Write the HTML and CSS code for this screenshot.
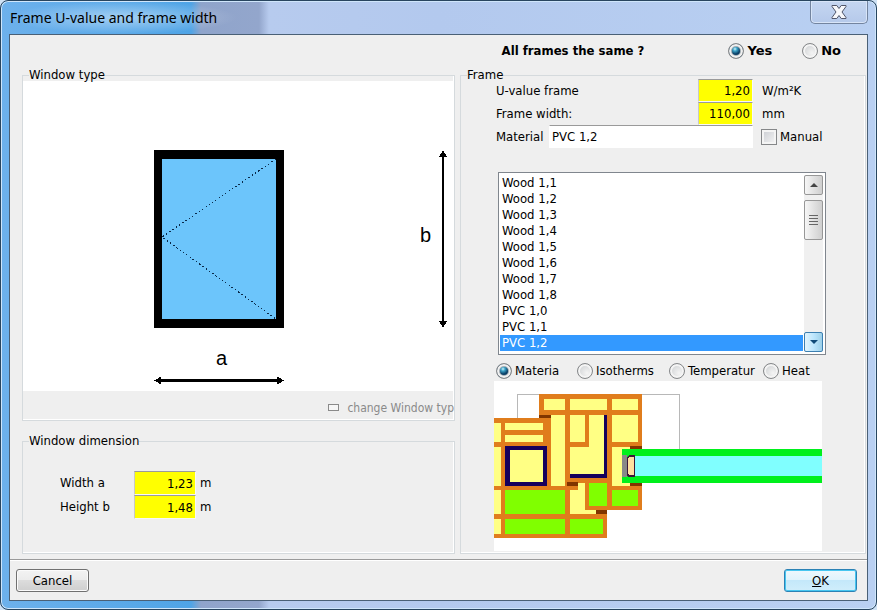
FILE: index.html
```html
<!DOCTYPE html>
<html lang="en">
<head>
<meta charset="utf-8">
<title>Frame U-value and frame width</title>
<link rel="stylesheet" href="styles.css">
</head>
<body>
<div class="window">
  <header class="titlebar">
    <h1 class="title">Frame U-value and frame width</h1>
    <button class="close" type="button" aria-label="Close">
      <svg width="16" height="14" viewBox="0 0 16 14"><path d="M1 .5h4.800L8 3.500 10.200 .5H15v1L11 7l4 5.500v1h-4.800L8 10.500l-2.200 3H1v-1L5 7 1 1.500z" fill="#f6f7fa" stroke="#50566a" stroke-linejoin="round"/></svg>
    </button>
  </header>

  <form class="client">
    <div class="same">
      <span class="question">All frames the same ?</span>
      <label class="choice strong"><input class="radio" type="radio" name="same" checked>Yes</label>
      <label class="choice strong"><input class="radio" type="radio" name="same">No</label>
    </div>

    <div class="groups">
      <div class="column">
        <fieldset class="group">
          <legend>Window type</legend>
          <svg class="drawing" viewBox="0 0 431 310" shape-rendering="crispEdges">
            <rect width="431" height="310" fill="#fff"/>
            <rect x="131" y="69" width="130" height="178"/>
            <rect x="139" y="78" width="114" height="160" fill="#6cc5fb"/>
            <path d="M253 78L139 156L253 238" fill="none" stroke="#0a2a4a" stroke-dasharray="1.500 2.500"/>
            <rect x="135" y="298" width="122" height="3"/>
            <path d="M131 299.500l7-4v8zM261 299.500l-7-4v8z"/>
            <rect x="419" y="74" width="2" height="169"/>
            <path d="M420 69l-4 7h8zM420 247l-4-7h8z"/>
            <text class="mark" x="193" y="284">a</text>
            <text class="mark" x="397" y="161">b</text>
          </svg>
          <div class="change"><button class="change-button" type="button" disabled><span class="slot"></span><span>change Window typ</span></button></div>
        </fieldset>

        <fieldset class="group dimension">
          <legend>Window dimension</legend>
          <div class="dim-grid">
            <label for="width">Width a</label><input class="number" id="width" type="text" value="1,23"><span>m</span>
            <label for="height">Height b</label><input class="number" id="height" type="text" value="1,48"><span>m</span>
          </div>
        </fieldset>
      </div>

      <fieldset class="group frame">
        <legend>Frame</legend>
        <div class="frame-grid">
          <label class="wide" for="uvalue">U-value frame</label><input class="number" id="uvalue" type="text" value="1,20"><span class="unit">W/m²K</span>
          <label class="wide" for="fwidth">Frame width:</label><input class="number" id="fwidth" type="text" value="110,00"><span class="unit">mm</span>
          <label for="material">Material</label><input class="name" id="material" type="text" value="PVC 1,2"><label class="unit choice"><input class="check" type="checkbox">Manual</label>
        </div>

        <div class="listbox">
          <select class="list" size="11" aria-label="Material">
            <option>Wood 1,1</option>
            <option>Wood 1,2</option>
            <option>Wood 1,3</option>
            <option>Wood 1,4</option>
            <option>Wood 1,5</option>
            <option>Wood 1,6</option>
            <option>Wood 1,7</option>
            <option>Wood 1,8</option>
            <option>PVC 1,0</option>
            <option>PVC 1,1</option>
            <option selected>PVC 1,2</option>
          </select>
          <div class="scrollbar">
            <button class="arrow" type="button" aria-label="Scroll up"><svg width="8" height="4" viewBox="0 0 8 4"><path d="M0 4L4 0l4 4z" fill="#444"/></svg></button>
            <div class="thumb"><svg width="9" height="10" viewBox="0 0 9 10"><path d="M0 .5h9M0 3.500h9M0 6.500h9M0 9.500h9" stroke="#666"/></svg></div>
            <button class="arrow hot" type="button" aria-label="Scroll down"><svg width="8" height="4" viewBox="0 0 8 4"><path d="M0 0h8L4 4z" fill="#0f4a78"/></svg></button>
          </div>
        </div>

        <div class="views">
          <label class="choice"><input class="radio" type="radio" name="view" checked>Materia</label>
          <label class="choice"><input class="radio" type="radio" name="view">Isotherms</label>
          <label class="choice"><input class="radio" type="radio" name="view">Temperatur</label>
          <label class="choice"><input class="radio" type="radio" name="view">Heat</label>
        </div>

        <svg class="section" viewBox="42 3 984 510" shape-rendering="crispEdges">
          <rect x="42" y="3" width="984" height="510" fill="#fff"/>
          <path d="M111 120V43H598V210" fill="none" stroke="#b8b8b8" stroke-width="3"/>
          <!-- profile body -->
          <path d="M177 42H486V390H381V474H42V114H177z" fill="#e07d1c"/>
          <path d="M381 390H486V474H381z" fill="#fff"/>
          <!-- chambers -->
          <g fill="#ffff84">
            <path d="M192 56h64v34h-64zM270 56h112v34H270zM396 56h78v34h-78z"/>
            <path d="M213 104h43v213h-43zM270 104h45v82h-45zM327 104h45v178H270V200h57zM396 104h78v82h-78z"/>
            <path d="M42 129h21v57H42zM76 129h113v21H76zM76 164h113v22H76z"/>
            <path d="M42 200h21v117H42zM396 200h55v8h-24v98h24v11h-55z"/>
            <path d="M42 330h21v72H42zM42 416h21v45H42zM270 330h23v-22h21v81h33v13h-77z"/>
          </g>
          <g fill="#80ff00">
            <path d="M76 330h180v72H76zM76 416h180v45H76zM270 416h99v45h-99zM328 308h53v70h-53zM396 330h77v48h-77z"/>
          </g>
          <!-- steel reinforcement -->
          <path d="M75 198h126v120H75z" fill="#15005c"/>
          <path d="M89 210h101v96H89z" fill="#ffff84"/>
          <path d="M371 104h11v191H270v-13h101z" fill="#15005c"/>
          <!-- gaskets -->
          <path d="M177 104h36v10h-36zM261 307h32v11h-32zM450 198h36v11h-36zM450 307h36v11h-36zM348 390h33v12h-33z" fill="#803500"/>
          <!-- glazing -->
          <path d="M426 208h600v100H426z" fill="#00f01c"/>
          <path d="M465 227h561v62H465z" fill="#80ffff"/>
          <path d="M427 226h14v66h-14z" fill="#888"/>
          <path d="M441 232l6-6h18v66h-18l-6-6z" fill="#3c1838"/>
          <path d="M444 236l5-6h12v56h-12l-5-6z" fill="#ffe0a0"/>
        </svg>
      </fieldset>
    </div>

    <footer class="actions">
      <button class="button" type="button">Cancel</button>
      <button class="button default" type="submit"><u>O</u>K</button>
    </footer>
  </form>
</div>
</body>
</html>
```
FILE: styles.css
```css
* { box-sizing: border-box; }

body {
  margin: 0;
  font: 13px/16px Tahoma, "DejaVu Sans Condensed", "Noto Sans", sans-serif;
  color: #000;
  background: #cfe2f5;
}

input, select, button { font: inherit; color: inherit; }

.window {
  display: flex;
  flex-direction: column;
  min-height: 100vh;
  padding: 0 8px 8px;
  border: 1px solid #28455f;
  border-radius: 8px;
  box-shadow: inset 0 0 0 1px #cfe6fb;
  background: linear-gradient(90deg, #6db1ec 0, #4fa4e6 190px, #8fa4cb 200px, #93a6cc 258px, #b7cbee 268px, #b3c9ee 50%, #b9d0f2);
}

.titlebar {
  display: flex;
  justify-content: space-between;
  align-items: flex-start;
  height: 33px;
}

.title {
  margin: 0;
  padding: 0 20px 0 1px;
  font: 400 14px/33px "Noto Sans", sans-serif;
  background: radial-gradient(closest-side, rgba(255, 255, 255, .45), rgba(255, 255, 255, 0));
}

.close {
  display: flex;
  align-items: center;
  justify-content: center;
  width: 58px;
  height: 23px;
  padding: 0;
  border: 1px solid #73849f;
  border-top: 0;
  border-radius: 0 0 5px 5px;
  background: linear-gradient(#c5d6f1, #b5c9ea);
  box-shadow: inset 0 0 0 1px #d8e5f8;
}

.client {
  flex: 1;
  display: flex;
  flex-direction: column;
  margin: 0;
  border: 1px solid #4a6076;
  background: #efefef;
}

.same {
  display: flex;
  justify-content: flex-end;
  align-items: center;
  height: 34px;
  padding: 0 26px 2px 0;
}

.question { margin-right: 84px; font-weight: 700; }
.choice { display: flex; align-items: center; gap: 3px; white-space: nowrap; }
.strong { font: bold 13px/16px "DejaVu Sans", sans-serif; }
.strong + .strong { margin-left: 30px; }

.radio {
  appearance: none;
  flex: none;
  width: 16px;
  height: 16px;
  margin: 0;
  border: 1px solid #858789;
  border-radius: 50%;
  background: radial-gradient(circle at 65% 65%, #f4f4f4, #c6c9cc);
  box-shadow: inset 0 0 0 2px #f4f4f4;
}

.radio:checked {
  background: radial-gradient(circle at 6px 5px, #d4f4fc 0, #3ba3c8 2px, #0b3f66 5px);
  box-shadow: inset 0 0 0 2px #f0f0f0, inset 0 0 0 3px #a0acb4;
}

.check {
  appearance: none;
  width: 16px;
  height: 16px;
  margin: 0;
  border: 1px solid #858789;
  background: linear-gradient(135deg, #c9ccd1, #f6f6f6);
  box-shadow: inset 0 0 0 2px #f4f4f4;
}

.groups {
  flex: 1;
  display: grid;
  grid-template-columns: 433fr 406fr;
  gap: 5px;
  padding: 0 1px 5px 12px;
}

.column { display: flex; flex-direction: column; gap: 14px; min-width: 0; }

.group {
  min-width: 0;
  margin: 0;
  padding: 0;
  border: 1px solid #d5dadd;
  box-shadow: inset -1px -1px #fff;
}

legend { position: relative; margin-left: 6px; padding: 0; line-height: 12px; }

.drawing { display: block; width: 100%; }
.mark { font: 20px "Liberation Sans", sans-serif; }

.change { display: flex; justify-content: flex-end; height: 29px; align-items: center; }

.change-button {
  display: flex;
  align-items: center;
  gap: 8px;
  padding: 4px 0 0;
  border: 0;
  background: none;
  color: #8a8a8a;
  font-size: 12px;
}

.slot { width: 11px; height: 7px; border: 1px solid #8a8a8a; background: #f6f6f6; }

.dimension { flex: 1; }

.dim-grid {
  display: grid;
  grid-template-columns: 74px 62px auto;
  justify-content: start;
  align-items: center;
  padding: 24px 0 0 37px;
}

.dim-grid span { padding-left: 4px; }

.number {
  width: 100%;
  height: 23px;
  padding: 0 2px;
  border: 1px solid #f8f8f8;
  border-top-color: #9a9a9a;
  border-left-color: #c8c8c8;
  border-radius: 0;
  background: #ff0;
  text-align: right;
}

.dim-grid .number { height: 24px; }

.frame { display: flex; flex-direction: column; }

.frame-grid {
  display: grid;
  grid-template-columns: 53px 1fr 55px 73px;
  align-items: center;
  margin: -2px 39px 24px 35px;
}

.wide { grid-column: span 2; }
.unit { padding-left: 9px; }
.frame-grid .choice { padding-left: 8px; }

.name {
  grid-column: span 2;
  width: 100%;
  height: 23px;
  padding: 0 2px;
  border: 1px solid #fff;
  border-top-color: #9a9a9a;
  background: #fff;
}

.listbox {
  display: flex;
  gap: 1px;
  margin: 0 39px 0 37px;
  padding: 2px 2px 2px 1px;
  border: 1px solid #80868e;
  background: #fff;
}

.list {
  flex: 1;
  height: 177px;
  padding: 0;
  border: 0;
  background: #fff;
  overflow: hidden;
  outline: 0;
}

.list option { min-height: 16px; height: 16px; padding: 0 2px; line-height: 16px; }
.list option:checked { color: #fff; background: #3399ff linear-gradient(#3399ff, #3399ff); }

.scrollbar {
  display: flex;
  flex-direction: column;
  width: 19px;
  background: #f0f0f0;
}

.arrow, .thumb {
  display: flex;
  align-items: center;
  justify-content: center;
  height: 20px;
  padding: 0;
  border: 1px solid #979797;
  border-radius: 2px;
  background: linear-gradient(90deg, #f6f6f6, #e2e2e2 50%, #cfcfcf);
}

.thumb { height: 40px; margin: 5px 0 auto; }
.hot { border-color: #3c7fb1; background: linear-gradient(90deg, #e3f4fc, #bde6fd 50%, #9ccfe8); }

.views {
  display: grid;
  grid-template-columns: 81px 92px 94px 1fr;
  align-items: center;
  margin: 8px 39px 2px 35px;
}

.section { display: block; margin: 0 43px 1px 33px; }

.actions {
  display: flex;
  justify-content: space-between;
  padding: 9px 10px 8px 6px;
  border-top: 1px solid #9a9a9a;
  box-shadow: inset 0 1px #fff;
}

.button {
  width: 73px;
  height: 23px;
  padding: 0;
  border: 1px solid #707070;
  border-radius: 3px;
  background: linear-gradient(#f3f3f3, #ebebeb 50%, #dcdcdc 50%, #cfcfcf);
  box-shadow: inset 0 0 0 1px #fbfbfb;
}

.default {
  border-color: #2c82b5;
  background: linear-gradient(#eef8fd, #dff3fc 50%, #c4e8fa 50%, #d0eefb);
  box-shadow: inset 0 0 0 1px #46c6f0;
}
```
